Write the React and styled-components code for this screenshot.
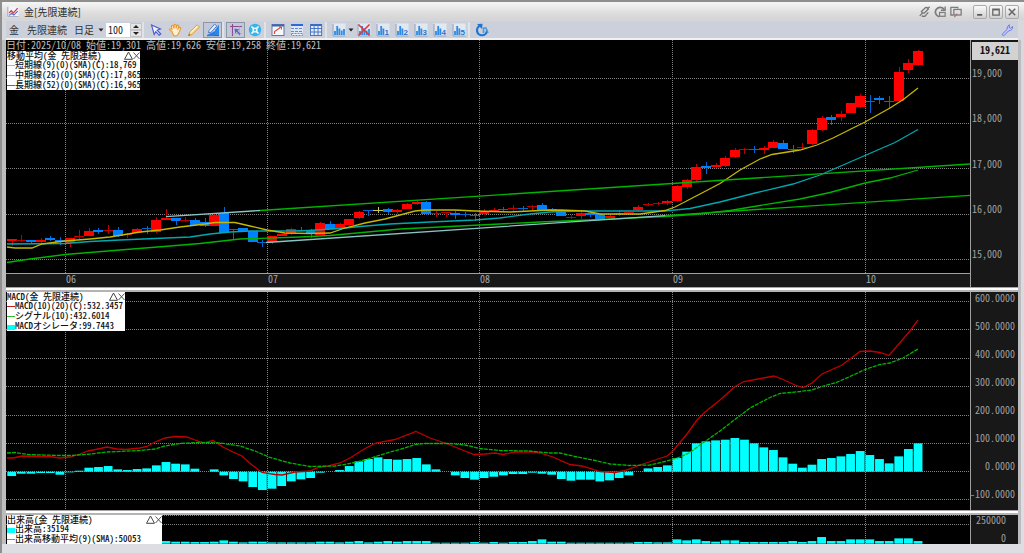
import React, { useState } from "react";
import styled, { createGlobalStyle } from "styled-components";

const GlobalStyle = createGlobalStyle`
  *, *::before, *::after { box-sizing: border-box; }
  html, body { margin: 0; padding: 0; }
  body {
    font-family: "Noto Sans CJK JP", "Liberation Sans", sans-serif;
    font-size: 10px;
    line-height: 12px;
    color: #333;
  }
  button, input, select { font: inherit; color: inherit; margin: 0; padding: 0; border: 0; background: none; }
`;

/* ---------- chart data ---------- */

const STEP = 9.642;
const FIRST = 11.7;
const xAt = (i) => FIRST + i * STEP;
const MONTHS = [65, 267, 479, 672, 865];

/* direction, body top, body bottom, wick top, wick bottom */
const CANDLES = [
  ["r", 239, 241, 239, 246], ["r", 240, 241, 235, 242], ["b", 240, 242, 240, 243], ["r", 240, 242, 238, 244],
  ["b", 238, 240, 236, 241], ["b", 240, 242, 237, 245], ["r", 238, 243, 238, 247], ["r", 236, 237, 230, 239],
  ["r", 231, 236, 228, 236], ["b", 230, 232, 228, 234], ["r", 230, 231, 225, 234], ["b", 230, 236, 227, 237],
  ["r", 234, 235, 233, 238], ["r", 229, 233, 228, 233], ["b", 228, 229, 226, 234], ["r", 220, 232, 217, 233],
  ["r", 218, 220, 209, 220], ["b", 218, 221, 218, 225], ["r", 220, 221, 217, 222], ["b", 220, 225, 218, 226],
  ["b", 222, 226, 218, 227], ["r", 215, 226, 214, 226], ["b", 213, 233, 207, 233], ["b", 229, 230, 229, 239],
  ["b", 228, 231, 228, 231], ["b", 231, 242, 231, 242], ["b", 242, 243, 240, 247], ["r", 236, 242, 236, 244],
  ["r", 234, 236, 234, 236], ["r", 229, 234, 228, 235], ["b", 230, 231, 227, 231], ["b", 230, 234, 229, 238],
  ["r", 223, 235, 222, 235], ["b", 224, 229, 221, 229], ["r", 224, 228, 223, 229], ["r", 219, 225, 219, 226],
  ["r", 212, 218, 211, 219], ["b", 210, 211, 210, 216], ["n", 210, 211, 207, 213], ["b", 209, 212, 208, 214],
  ["r", 210, 212, 209, 214], ["r", 204, 209, 203, 209], ["r", 202, 204, 200, 205], ["b", 202, 214, 201, 215],
  ["r", 213, 214, 211, 217], ["r", 212, 213, 212, 217], ["b", 213, 215, 211, 219], ["b", 214, 215, 212, 217],
  ["b", 215, 216, 213, 221], ["r", 211, 214, 209, 215], ["r", 210, 212, 208, 212], ["b", 209, 210, 207, 212],
  ["r", 208, 209, 205, 212], ["b", 208, 209, 206, 211], ["r", 206, 207, 205, 211], ["b", 205, 210, 203, 211],
  ["b", 209, 211, 208, 212], ["b", 212, 216, 212, 216], ["r", 217, 218, 215, 219], ["r", 213, 216, 212, 219],
  ["b", 213, 215, 213, 217], ["b", 214, 219, 213, 220], ["r", 216, 218, 215, 218], ["r", 213, 214, 210, 216],
  ["r", 212, 213, 212, 213], ["r", 207, 210, 205, 211], ["r", 204, 205, 203, 206], ["r", 203, 204, 202, 205],
  ["r", 201, 203, 200, 205], ["r", 186, 201, 185, 202], ["r", 180, 187, 179, 189], ["r", 167, 180, 164, 181],
  ["b", 166, 168, 162, 174], ["r", 165, 167, 163, 168], ["r", 158, 166, 156, 167], ["r", 150, 157, 148, 158],
  ["r", 149, 150, 148, 154], ["b", 149, 150, 146, 153], ["r", 148, 150, 146, 154], ["r", 142, 148, 140, 148],
  ["b", 143, 149, 140, 149], ["b", 149, 150, 145, 153], ["r", 147, 148, 143, 149], ["r", 130, 144, 129, 145],
  ["r", 118, 130, 116, 131], ["b", 117, 120, 115, 125], ["r", 114, 117, 111, 121], ["r", 103, 113, 103, 113],
  ["r", 96, 107, 94, 108], ["b", 101, 102, 95, 113], ["b", 98, 100, 96, 104], ["b", 101, 102, 96, 108],
  ["r", 72, 101, 67, 102], ["r", 63, 70, 59, 73], ["r", 51, 65, 50, 66],
];

const MA_SHORT = "7,247 15,248 32,248 42,244 65,241 90,239 110,237 140,232 160,230 180,227 205,224 215,222.5 235,222.5 250,226 267,230 285,233 310,233.5 330,233 345,228 365,223 385,219 400,215 415,211 425,210 455,210 475,211 510,212 540,210.5 560,210 585,211 600,214 640,214 665,210.5 675,207 700,194 720,183.5 740,170 760,159 772,154.5 800,150 817,145 833,138 850,129.5 865,122 890,108 904,99 918,88";
const MA_MID = "7,244 65,243.5 90,241.5 120,240 190,237 210,234 230,232 250,231 300,231 340,228.5 360,226.5 390,224 430,222 475,220 500,218 530,214 550,212 580,211 640,211 665,211 690,208.5 720,202 755,193 793,184 820,175 865,155.5 895,142.5 918,129.5";
const MA_LONG = "7,262.5 30,259 65,254.5 120,250 170,246 200,243.5 240,239 300,237 330,235.5 400,229 480,225 540,222 600,219.5 665,216.5 700,214 730,210.5 760,205.5 800,199 830,192.5 865,183 890,178 918,170";

const MACD = "7,458 13,458 22,456 50,456.5 60,458 70,457 80,454 88,451 98,449 107,447 117,449 126,449.5 140,448 147,446.5 155,442 165,438 175,436.5 187,437 195,440 204,443 213,440.5 223,447 233,452 242,456 252,465 262,472.5 275,474.5 282,475 295,472 310,471 318,467.5 328,466 340,463 350,458 365,448.5 376,443 395,439.5 416,431.5 430,438 445,443 460,449 474,454.5 485,454 495,453 503,454.5 515,452 532,452 540,453 553,457 570,464.5 582,466 600,471.5 615,472.5 625,470.5 640,465 655,460 667,456 672,452 687,434 697,420 705,412 720,400 735,386.5 744,381.5 758,379 774,376 783,379.5 795,385 803,387.5 812,383 822,374 842,365 860,351.5 870,351 880,352.5 889,355.5 910,331 918,320";
const SIGNAL = "7,453 15,452.5 28,454.5 60,455.5 72,455.5 90,454 107,452 140,450.5 155,449 165,446 180,443.5 200,442.5 220,443 240,446 255,451 270,457.5 290,463 310,466.5 335,466 350,463.5 365,460 377,456 390,452 400,449.5 415,444.5 425,443.5 450,443.5 465,445 480,448.5 500,450.5 530,451 550,453 560,453 575,456.5 593,460 610,464 630,465.5 650,465 665,461.5 680,457 690,452.5 700,445 720,431 735,419.5 750,408 770,397.5 780,393.5 800,391.5 812,390 825,385.5 835,383 850,376.5 865,369.5 880,364.5 890,363 903,358 918,349";

/* bar lengths, three units to one chart row */
const OSCILLATOR = [
  -13, -6, -6, -4, -4, -9, -2, 3, 12, 14, 17, 7, 5, 8, 10, 19, 29, 24, 22, 9, 0, 7, -11, -22, -29, -46, -55, -51, -43,
  -29, -23, -19, -3, 0, 5, 17, 31, 38, 43, 38, 36, 38, 41, 22, 7, 0, -11, -19, -24, -19, -15, -11, -7, -7, -3, -6, -9,
  -22, -27, -24, -24, -29, -26, -19, -11, 0, 10, 14, 19, 41, 60, 85, 91, 94, 96, 101, 96, 85, 73, 65, 43, 24, 12, 21,
  38, 41, 46, 53, 62, 50, 38, 25, 46, 68, 85,
];
const VOLUME = [
  4, 4, 4, 4, 4, 4, 4, 4, 5, 5, 4, 4, 4, 5, 5, 6, 8, 6, 6, 5, 5, 6, 10, 6, 4, 6, 6, 4, 4, 4, 4, 4, 6, 6, 4, 6, 8, 4, 6,
  8, 6, 8, 8, 8, 3, 3, 3, 3, 5, 3, 5, 3, 5, 5, 8, 13, 6, 6, 3, 3, 3, 3, 3, 3, 3, 5, 5, 4, 4, 13, 10, 13, 8, 6, 10, 10,
  5, 5, 5, 5, 5, 8, 5, 8, 20, 8, 8, 13, 13, 13, 8, 8, 16, 16, 8,
];

const BODY = { r: "#ff0000", b: "#0080ff", n: "#c8c860" };
const WICK = { r: "#c00000", b: "#0068d0", n: "#c8c860" };

/* ---------- window frame ---------- */

const Frame = styled.main`
  display: flex;
  flex-direction: column;
  min-height: 100vh;
  padding: 0 0 9px;
  border-top: 2px solid #8e8e8e;
  border-left: 2px solid #909090;
  background: linear-gradient(#d6d8de, #dcdee4);
`;

const TitleBar = styled.header`
  display: flex;
  align-items: center;
  height: 18px;
  padding: 1px 5px 0 5px;
  background: linear-gradient(#f6f6f6, #dedede 60%, #d4d4d4);
`;

const Title = styled.h1`
  flex: 1;
  margin: 0 0 0 5px;
  font-size: 10px;
  font-weight: 400;
  line-height: 14px;
  color: #2c2c2c;
`;

const TitleTools = styled.div`
  display: flex;
  gap: 4px;
  margin-right: 11px;
  color: #777;
`;

const IconButton = styled.button`
  display: grid;
  place-items: center;
  width: 12px;
  height: 14px;
`;

const WindowButtons = styled.div`
  display: flex;
  gap: 2px;
`;

const WindowButton = styled.button`
  display: grid;
  place-items: center;
  width: 14px;
  height: 14px;
  border: 1px solid #aaa;
  border-radius: 2px;
  background: linear-gradient(#fafafa, #cfcfcf);
  color: #666;
`;

const Toolbar = styled.div`
  display: flex;
  align-items: center;
  height: 20px;
  margin: 0 6px 0 4px;
  padding: 0 2px;
  background: #ccd0da;
  border-top: 1px solid #d4d6dc;
  border-bottom: 2px solid #f0f0f0;
`;

const Symbol = styled.span`
  flex: none;
  width: ${(p) => p.$width}px;
  padding-left: 1px;
  white-space: nowrap;
  color: #333;
`;

const PeriodSelect = styled.label`
  display: flex;
  align-items: center;
  gap: 4px;
  width: 32px;

  select { width: 20px; appearance: none; line-height: 14px; }
`;

const CountBox = styled.div`
  display: flex;
  width: 36px;
  height: 14px;
  background: #fff;

  input {
    width: 24px;
    padding-left: 2px;
    appearance: textfield;
    font-feature-settings: "hwid";
    color: #222;
  }
  input::-webkit-inner-spin-button { appearance: none; margin: 0; }
`;

const Steppers = styled.div`
  display: grid;
  grid-template-rows: 1fr 1fr;
  width: 12px;
`;

const StepButton = styled.button`
  display: grid;
  place-items: center;
  background: #e4e4e4;
  border: 1px solid #c4c4c4;
`;

const ToolGroup = styled.div`
  display: flex;
  align-items: center;
  margin-left: ${(p) => p.$before || 0}px;
  padding-left: 2px;
  border-left: ${(p) => (p.$divided ? "2px solid #dfe2e8" : "0")};
`;

const ToolButton = styled.button`
  display: grid;
  place-items: center;
  width: 19px;
  height: 16px;
  border: 1px solid ${(p) => (p.$on ? "#8d96a8" : "transparent")};
  background: ${(p) => (p.$on ? "#c2c8d6" : "transparent")};

  svg { display: block; }
`;

const CaretButton = styled.button`
  width: 6px;
  height: 16px;

  svg { display: block; }
`;

const Spacer = styled.div`
  flex: 1;
`;

/* ---------- panels ---------- */

const Panels = styled.div`
  display: flex;
  flex: 1;
  flex-direction: column;
  margin-right: 3px;
  border-right: 3px solid #bcbcbe;
  border-left: 4px solid #bdbdbd;
`;

const Panel = styled.section`
  display: grid;
  flex: ${(p) => p.$share} 1 ${(p) => p.$share}px;
  grid-template-columns: minmax(0, 1fr) 48px;
  min-height: 0;
  background: #181818;
`;

const Splitter = styled.div`
  height: 5px;
  border-top: 1px solid #a8a4a8;
  border-bottom: 2px solid #b4b4b4;
  background: #fff;
`;

const PlotColumn = styled.div`
  display: flex;
  flex-direction: column;
  min-height: 0;
`;

const Plot = styled.div`
  position: relative;
  flex: 1;
  min-height: 0;
  background: #000;

  > svg { position: absolute; inset: 0; width: 100%; height: 100%; }
`;

const Readout = styled.p`
  position: absolute;
  top: 0;
  left: 0;
  margin: 0;
  color: #c0c0c0;
  line-height: 10px;
  font-feature-settings: "hwid";
  white-space: pre;
`;

const DateStrip = styled.div`
  display: grid;
  grid-template-columns: 60fr 202fr 212fr 193fr 193fr 104fr;
  height: 14px;
  border-top: 1px solid #a0a0a0;
  background: #181818;
  color: #a8a8a8;
  line-height: 10px;
  font-feature-settings: "hwid";

  span:first-child { grid-column: 2; }
`;

const Axis = styled.div`
  position: relative;
  display: flex;
  flex-direction: column;
  justify-content: space-between;
  align-items: ${(p) => p.$align};
  padding: ${(p) => p.$pad};
  border-left: 1px solid #a0a0a0;
  background: #181818;
  color: #a0a0a0;
  line-height: ${(p) => p.$line || 12}px;
  font-feature-settings: "hwid";
`;

const LastPrice = styled.strong`
  position: absolute;
  top: 2px;
  left: 1px;
  right: 0;
  height: 18px;
  background: #d2d2d2;
  color: #111;
  line-height: 16px;
  text-align: center;
`;

const LegendBox = styled.div`
  position: absolute;
  top: ${(p) => p.$top}px;
  left: 1px;
  width: ${(p) => p.$width}px;
  background: #fff;
  color: #111;
  font-size: 9px;
  font-weight: 500;
  line-height: 10px;
  font-feature-settings: "hwid";
  white-space: nowrap;
`;

const LegendHead = styled.div`
  display: flex;
  height: 9px;
  line-height: 9px;

  h2 { flex: 1; margin: 0; font: inherit; font-feature-settings: inherit; }
  button { width: 9px; height: 9px; }
  button + button { width: 7px; }
  svg { display: block; }
`;

const LegendRow = styled.div`
  display: flex;
  align-items: center;
  height: 10px;
`;

const Swatch = styled.i`
  flex: none;
  width: 8px;
  height: ${(p) => (p.$block ? 5 : 1)}px;
  margin-top: ${(p) => (p.$block ? 3 : 0)}px;
  background: ${(p) => p.$color};
`;

function Legend({ title, rows, width, top = 0 }) {
  return (
    <LegendBox $width={width} $top={top}>
      <LegendHead>
        <h2>{title}</h2>
        <button aria-label="折りたたむ">
          <svg width="9" height="9" viewBox="0 0 9 9"><path d="M4.5 1 L8.5 8.3 H.5 Z" fill="none" stroke="#444" /></svg>
        </button>
        <button aria-label="閉じる">
          <svg width="7" height="9" viewBox="0 0 7 9"><path d="M.5 1.5 L6.5 8 M6.5 1.5 L.5 8" stroke="#555" /></svg>
        </button>
      </LegendHead>
      {rows.map((r) => (
        <LegendRow key={r.text}>
          <Swatch $color={r.color} $block={r.block} />
          {r.text}
        </LegendRow>
      ))}
    </LegendBox>
  );
}

function Grid({ rows, top, bottom }) {
  return (
    <g stroke="#808080" strokeDasharray="1 1" shapeRendering="crispEdges">
      {rows.map((y) => <line key={y} x1="6" x2="970" y1={y + 0.5} y2={y + 0.5} />)}
      {MONTHS.map((x) => <line key={x} x1={x + 0.5} x2={x + 0.5} y1={top} y2={bottom} />)}
    </g>
  );
}

function PriceChart() {
  return (
    <svg viewBox="6 40 964 233" preserveAspectRatio="none" role="img" aria-label="金 先限連続 日足">
      <Grid rows={[78, 123, 168, 214, 259]} top={40} bottom={273} />
      {CANDLES.map(([k, top, bottom, high, low], i) => {
        const x = Math.round(xAt(i));
        return (
          <g key={i} shapeRendering="crispEdges">
            <rect x={x} y={high} width="1" height={low - high} fill={WICK[k]} />
            <rect x={x - 5} y={top} width="10" height={bottom - top} fill={bottom - top > 1 ? BODY[k] : WICK[k]} />
          </g>
        );
      })}
      <g fill="none" strokeWidth="1.3">
        <polyline points={MA_LONG} stroke="#00b400" />
        <polyline points={MA_MID} stroke="#00a8b0" />
        <polyline points={MA_SHORT} stroke="#c4b800" />
        <path d="M260 210.5 L970 164" stroke="#00b400" />
        <path d="M665 215.6 L970 195.3" stroke="#00b400" />
        <path d="M166 216.7 L260 210.5 M266 242.5 L665 215.6" stroke="#88c4c4" />
      </g>
    </svg>
  );
}

function MacdChart() {
  return (
    <svg viewBox="6 292 964 218" preserveAspectRatio="none" role="img" aria-label="MACD">
      <Grid rows={[301, 329, 358, 386, 415, 443, 471, 499]} top={292} bottom={510} />
      <g fill="#00ffff">
        {OSCILLATOR.map((v, i) => (
          <rect key={i} x={xAt(i) - 4.4} y={v > 0 ? 471.7 - v / 3 : 471.7} width="8.8" height={Math.abs(v) / 3} />
        ))}
      </g>
      <polyline points={MACD} fill="none" stroke="#c00000" strokeWidth="1.3" />
      <polyline points={SIGNAL} fill="none" stroke="#00b400" strokeWidth="1.3" strokeDasharray="4 1" />
    </svg>
  );
}

function VolumeChart() {
  return (
    <svg viewBox="6 515 964 29" preserveAspectRatio="none" role="img" aria-label="出来高">
      <Grid rows={[515, 524]} top={515} bottom={544} />
      <g fill="#00ffff">
        {VOLUME.map((v, i) => <rect key={i} x={xAt(i) - 4.4} y={543.7 - v / 3} width="8.8" height={v / 3} />)}
      </g>
    </svg>
  );
}

/* ---------- icons ---------- */

const Icon = ({ children, size = 14 }) => (
  <svg width={size} height={size} viewBox="0 0 14 14" fill="none" aria-hidden="true">{children}</svg>
);

const Caret = () => (
  <svg width="6" height="4" viewBox="0 0 6 4" aria-hidden="true"><path d="M.5 .5 H5.5 L3 3.5 Z" fill="#222" /></svg>
);

const ChartLogo = () => (
  <Icon size={12}>
    <rect x=".5" y=".5" width="13" height="13" fill="#f2f4fa" />
    <path d="M1 1 V12.5 H13.5" stroke="#8a94b0" />
    <path d="M2.5 8 L5 5.5 7.5 8 12.5 2.5" stroke="#e03030" strokeWidth="1.4" />
    <path d="M2.5 11 L5.5 8.5 8 10.5 12.5 6" stroke="#5068c8" strokeWidth="1.2" />
  </Icon>
);

const CursorIcon = () => (
  <Icon>
    <path d="M2.5 2 L11.5 6 8.2 7.2 11.8 11 10.2 12.3 6.8 8.6 5.2 11.5 Z" fill="#eef0ff" stroke="#4a58c8" strokeWidth="1.1" />
  </Icon>
);

const HandIcon = () => (
  <Icon>
    <path d="M4 8.5 L1.5 6.6 Q2 5.2 3.6 6 L4 6.2 3.4 3 Q4.5 1.8 5.2 3 L6 5.4 6.2 1.8 Q7.2 .6 8 1.8 L8.1 5.2 9.2 2.3 Q10.6 1.7 10.7 3 L10 6 11.6 4.4 Q13 4.4 12.6 5.8 L10.6 10.4 Q9.6 13 7.2 13 5.2 13 4 8.5 Z" fill="#fff0d4" stroke="#e89a30" strokeWidth="1.1" />
  </Icon>
);

const PencilIcon = () => (
  <Icon>
    <path d="M1.5 12.7 L2.8 9 10.2 1.8 12.5 4 5.1 11.4 Z" fill="#ffd890" stroke="#e49a34" />
    <path d="M3.8 9.6 L10.6 2.9" stroke="#fff4d8" strokeWidth="1.2" />
    <path d="M1.3 12.9 L2.1 10.9 3.3 12.1 Z" fill="#7c5420" />
  </Icon>
);

const DrawIcon = () => (
  <Icon>
    <path d="M1 12 L9 8 V12 Z" fill="#2a7ce0" />
    <path d="M3 7.5 L8.6 1.2 10.8 3 5.2 9.2 2.5 9.8 Z" fill="#e8f2ff" stroke="#4a7ac8" />
    <path d="M9 13 V7 L13 1.5 V13 Z" fill="#2f86e6" />
    <path d="M1 12.7 H13" stroke="#2a62b8" />
  </Icon>
);

const CrossIcon = () => (
  <Icon>
    <path d="M3.5 1 V13 M1 3.5 H13" stroke="#8c4890" strokeWidth="1.1" />
    <path d="M3.5 10.5 H13 M10.5 3.5 V13" stroke="#8aa0cc" strokeDasharray="1 1" />
    <path d="M5.5 5.5 L10.5 6.5 8.6 7.8 11.5 11 10.3 12 7.6 8.8 6.2 10.4 Z" fill="#5868c4" />
  </Icon>
);

const RotateIcon = () => (
  <Icon>
    <circle cx="7" cy="7" r="6.2" fill="#34b4e8" />
    <path d="M3.5 3.5 L10.5 10.5 M10.5 3.5 L3.5 10.5" stroke="#fff" strokeWidth="1.6" />
    <circle cx="7" cy="7" r="2.6" fill="#e8faff" />
    <circle cx="7" cy="7" r="1.1" fill="#34b4e8" />
  </Icon>
);

const WindowIcon = () => (
  <Icon>
    <rect x="1" y="1.5" width="12" height="11" fill="#f6f8fc" stroke="#6278a8" />
    <path d="M1 2.5 H13" stroke="#3d64b8" strokeWidth="2" />
    <path d="M3.5 11 V8.5 L9.8 4.2" stroke="#e04a30" strokeWidth="1.2" />
    <path d="M8 4 H10.5 V6.5" stroke="#e04a30" />
  </Icon>
);

const RowsIcon = () => (
  <Icon>
    <rect x="1" y="1" width="12" height="12" fill="#dde6f4" />
    <path d="M1 2 H13" stroke="#2f6ad0" strokeWidth="2" />
    <path d="M1 5.5 H13 M1 8.5 H13" stroke="#5c8ad4" strokeWidth="1.2" strokeDasharray="3 1" />
    <rect x="1.5" y="10.5" width="11" height="2" fill="#e8eefa" stroke="#7088b8" strokeDasharray="2 1" />
  </Icon>
);

const TableIcon = () => (
  <Icon>
    <rect x="1" y="1" width="12" height="12" fill="#e2ebfa" />
    <path d="M1 2 H13" stroke="#2f6ad0" strokeWidth="2" />
    <path d="M1 5.5 H13 M1 9 H13 M1 12.5 H13 M1.5 1 V13 M5.2 1 V13 M9 1 V13 M12.6 1 V13" stroke="#4c76c0" />
  </Icon>
);

const BarsIcon = ({ mark }) => (
  <Icon>
    <rect x=".5" y=".5" width="13" height="13" fill="#e2e8f0" />
    <path d="M1 1 V13 H13.5" stroke="#8c9cb4" />
    <path d="M3 12 V8 M5.2 12 V3 M7.4 12 V5.5" stroke="#2c8ae4" strokeWidth="1.8" />
    {!(mark > 0) && <path d="M9.7 12 V7.5 M12 12 V6" stroke="#2c8ae4" strokeWidth="1.8" />}
    {mark === "x" && <path d="M1.5 1.5 L12.5 12.5 M12.5 1.5 L1.5 12.5" stroke="#e03838" strokeWidth="1.6" />}
    {mark > 0 && <text x="8.6" y="12" fontSize="8" fontWeight="700" fontFamily="Liberation Sans, sans-serif" fill="#2a72cc">{mark}</text>}
  </Icon>
);

const ReloadIcon = () => (
  <Icon>
    <path d="M5.5 2.5 A5 5 0 1 0 12 7.5" stroke="#1c74cc" strokeWidth="2.2" />
    <path d="M2 1 L7.5 .8 7 6 Z" fill="#1c74cc" />
    <path d="M8.5 10 V5 H11 L13 10" stroke="#4898e4" strokeWidth="1.6" />
  </Icon>
);

const WrenchIcon = () => (
  <Icon>
    <path d="M2 11.5 L7 6.4 Q6.6 3.4 9.4 1.8 L9 4.4 10.4 5.2 12.6 3.6 Q12.8 7.4 8.6 7.9 L3.6 12.9 Z" fill="#c4ccff" stroke="#6a78e0" />
  </Icon>
);

const LinkIcon = () => (
  <Icon size={12}>
    <path d="M5 8.5 L2 11.5 M4 6.5 L8.5 2 Q11 1 12 3.5 L7.5 8 Q5 9 4 6.5 Z M4.5 11.5 Q7 13 9 11 L12 7.5 M11 3.5 L13.5 .8" stroke="#777" strokeWidth="1.5" />
  </Icon>
);

const CopyBackIcon = () => (
  <Icon size={12}>
    <path d="M12 4.5 A5.5 5.5 0 1 0 6 12.5" stroke="#7c7c7c" strokeWidth="2" />
    <path d="M8 5 H13 V.5" stroke="#7c7c7c" strokeWidth="1.6" />
    <rect x="6.5" y="7.5" width="6.5" height="4.5" stroke="#7c7c7c" strokeWidth="1.4" />
  </Icon>
);

const DetachIcon = () => (
  <Icon size={12}>
    <path d="M4 10.5 H1 V1.5 H9 V3" stroke="#7c7c7c" strokeWidth="1.5" />
    <rect x="4.5" y="4" width="8.5" height="6.5" stroke="#7c7c7c" strokeWidth="1.5" />
    <path d="M5 13 L8.5 9" stroke="#a87070" strokeWidth="1.4" />
  </Icon>
);

/* ---------- page ---------- */

export default function App() {
  const [count, setCount] = useState(100);

  return (
    <Frame>
      <GlobalStyle />
      <TitleBar>
        <ChartLogo />
        <Title>金[先限連続]</Title>
        <TitleTools>
          <IconButton aria-label="リンク"><LinkIcon /></IconButton>
          <IconButton aria-label="戻す"><CopyBackIcon /></IconButton>
          <IconButton aria-label="切り離す"><DetachIcon /></IconButton>
        </TitleTools>
        <WindowButtons>
          <WindowButton aria-label="最小化"><Icon size={10}><path d="M3 11 H10" stroke="#555" strokeWidth="2.4" /></Icon></WindowButton>
          <WindowButton aria-label="最大化"><Icon size={10}><path d="M2.5 3 H11.5 V11.5 H2.5 Z M2.5 4 H11.5" stroke="#666" strokeWidth="1.8" /></Icon></WindowButton>
          <WindowButton aria-label="ウィンドウを閉じる"><Icon size={10}><path d="M2.5 2.5 L11.5 11.5 M11.5 2.5 L2.5 11.5" stroke="#666" strokeWidth="2.2" /></Icon></WindowButton>
        </WindowButtons>
      </TitleBar>

      <Toolbar>
        <Symbol $width={18}>金</Symbol>
        <Symbol $width={48}>先限連続</Symbol>
        <PeriodSelect>
          <select aria-label="足種" defaultValue="日足"><option>日足</option></select>
          <Caret />
        </PeriodSelect>
        <CountBox>
          <input type="number" aria-label="表示本数" value={count} onChange={(e) => setCount(Number(e.target.value))} />
          <Steppers>
            <StepButton aria-label="増やす" onClick={() => setCount(count + 1)}>
              <svg width="6" height="3" viewBox="0 0 6 3"><path d="M0 3 L3 0 6 3 Z" fill="#222" /></svg>
            </StepButton>
            <StepButton aria-label="減らす" onClick={() => setCount(count - 1)}>
              <svg width="6" height="3" viewBox="0 0 6 3"><path d="M0 0 L3 3 6 0 Z" fill="#222" /></svg>
            </StepButton>
          </Steppers>
        </CountBox>
        <ToolGroup $divided>
          <ToolButton aria-label="選択"><CursorIcon /></ToolButton>
          <ToolButton aria-label="移動"><HandIcon /></ToolButton>
          <ToolButton aria-label="描画"><PencilIcon /></ToolButton>
          <ToolButton aria-label="描画ツール" $on><DrawIcon /></ToolButton>
        </ToolGroup>
        <ToolGroup $divided>
          <ToolButton aria-label="十字線" $on><CrossIcon /></ToolButton>
          <ToolButton aria-label="解除"><RotateIcon /></ToolButton>
        </ToolGroup>
        <ToolGroup $divided>
          <ToolButton aria-label="別ウィンドウ"><WindowIcon /></ToolButton>
          <ToolButton aria-label="分割"><RowsIcon /></ToolButton>
          <ToolButton aria-label="一覧表"><TableIcon /></ToolButton>
        </ToolGroup>
        <ToolGroup $divided>
          <ToolButton aria-label="指標"><BarsIcon mark="none" /></ToolButton>
          <CaretButton aria-label="指標メニュー"><Caret /></CaretButton>
          <ToolButton aria-label="指標を消去"><BarsIcon mark="x" /></ToolButton>
          {[1, 2, 3, 4, 5].map((n) => (
            <ToolButton key={n} aria-label={`設定${n}`}><BarsIcon mark={n} /></ToolButton>
          ))}
        </ToolGroup>
        <ToolGroup $divided>
          <ToolButton aria-label="更新"><ReloadIcon /></ToolButton>
        </ToolGroup>
        <Spacer />
        <ToolButton aria-label="設定"><WrenchIcon /></ToolButton>
      </Toolbar>

      <Panels>
        <Panel $share={247}>
          <PlotColumn>
            <Plot>
              <PriceChart />
              <Readout>日付:2025/10/08 始値:19,301 高値:19,626 安値:19,258 終値:19,621</Readout>
              <Legend
                top={11}
                width={133}
                title="移動平均(金 先限連続)"
                rows={[
                  { color: "#c8c820", text: "短期線(9)(0)(SMA)(C):18,769" },
                  { color: "#60c0f0", text: "中期線(26)(0)(SMA)(C):17,865" },
                  { color: "#00b400", text: "長期線(52)(0)(SMA)(C):16,965" },
                ]}
              />
            </Plot>
            <DateStrip>
              <span>06</span><span>07</span><span>08</span><span>09</span><span>10</span>
            </DateStrip>
          </PlotColumn>
          <Axis $align="flex-start" $pad="27px 0 27px 1px">
            <LastPrice>19,621</LastPrice>
            <span>19,000</span><span>18,000</span><span>17,000</span><span>16,000</span><span>15,000</span>
          </Axis>
        </Panel>
        <Splitter />
        <Panel $share={218}>
          <Plot>
            <MacdChart />
            <Legend
              width={118}
              title="MACD(金 先限連続)"
              rows={[
                { color: "#c82020", text: "MACD(10)(20)(C):532.3457" },
                { color: "#30c030", text: "シグナル(10):432.6014" },
                { color: "#00ffff", text: "MACDオシレータ:99.7443", block: true },
              ]}
            />
          </Plot>
          <Axis $align="flex-end" $pad="0 3px 10px 0">
            <span>600.0000</span><span>500.0000</span><span>400.0000</span><span>300.0000</span>
            <span>200.0000</span><span>100.0000</span><span>0.0000</span><span>-100.0000</span>
          </Axis>
        </Panel>
        <Splitter />
        <Panel $share={29}>
          <Plot>
            <VolumeChart />
            <Legend
              width={155}
              title="出来高(金 先限連続)"
              rows={[
                { color: "#00ffff", text: "出来高:35194", block: true },
                { color: "#30c030", text: "出来高移動平均(9)(SMA):50053" },
              ]}
            />
          </Plot>
          <Axis $align="flex-end" $pad="0 12px 2px 0" $line={9}>
            <span>250000</span><span>0</span>
          </Axis>
        </Panel>
      </Panels>
    </Frame>
  );
}
